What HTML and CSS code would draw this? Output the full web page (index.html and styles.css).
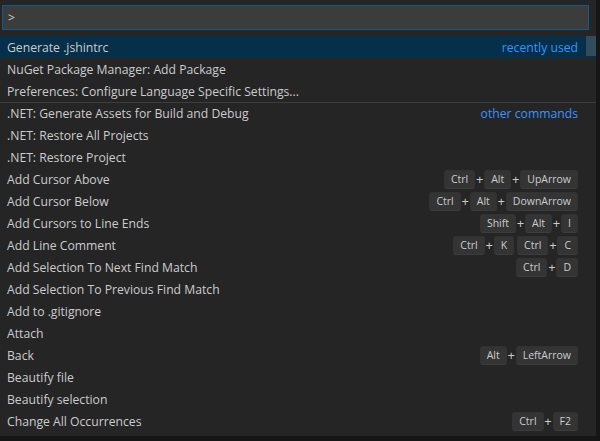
FILE: index.html
```html
<!DOCTYPE html>
<html>
<head>
<meta charset="utf-8">
<link rel="stylesheet" href="styles.css">
</head>
<body>
<div class="widget">
  <div class="input-wrap">
    <div class="input">&gt;</div>
  </div>
  <div class="list">
    <div class="slider"></div>
    <div class="row active"><span class="label">Generate .jshintrc</span><span class="tag">recently used</span></div>
    <div class="row"><span class="label">NuGet Package Manager: Add Package</span></div>
    <div class="row"><span class="label">Preferences: Configure Language Specific Settings...</span></div>
    <div class="row sep"><span class="label">.NET: Generate Assets for Build and Debug</span><span class="tag">other commands</span></div>
    <div class="row"><span class="label">.NET: Restore All Projects</span></div>
    <div class="row"><span class="label">.NET: Restore Project</span></div>
    <div class="row"><span class="label">Add Cursor Above</span><span class="keys"><kbd>Ctrl</kbd><i>+</i><kbd>Alt</kbd><i>+</i><kbd>UpArrow</kbd></span></div>
    <div class="row"><span class="label">Add Cursor Below</span><span class="keys"><kbd>Ctrl</kbd><i>+</i><kbd>Alt</kbd><i>+</i><kbd>DownArrow</kbd></span></div>
    <div class="row"><span class="label">Add Cursors to Line Ends</span><span class="keys"><kbd>Shift</kbd><i>+</i><kbd>Alt</kbd><i>+</i><kbd>I</kbd></span></div>
    <div class="row"><span class="label">Add Line Comment</span><span class="keys"><kbd>Ctrl</kbd><i>+</i><kbd>K</kbd><b class="chord"></b><kbd>Ctrl</kbd><i>+</i><kbd>C</kbd></span></div>
    <div class="row"><span class="label">Add Selection To Next Find Match</span><span class="keys"><kbd>Ctrl</kbd><i>+</i><kbd>D</kbd></span></div>
    <div class="row"><span class="label">Add Selection To Previous Find Match</span></div>
    <div class="row"><span class="label">Add to .gitignore</span></div>
    <div class="row"><span class="label">Attach</span></div>
    <div class="row"><span class="label">Back</span><span class="keys"><kbd>Alt</kbd><i>+</i><kbd>LeftArrow</kbd></span></div>
    <div class="row"><span class="label">Beautify file</span></div>
    <div class="row"><span class="label">Beautify selection</span></div>
    <div class="row"><span class="label">Change All Occurrences</span><span class="keys"><kbd>Ctrl</kbd><i>+</i><kbd>F2</kbd></span></div>
  </div>
</div>
</body>
</html>
```
FILE: styles.css
```css
html, body {
  margin: 0;
  padding: 0;
  background: #161616;
  height: 100%;
  overflow: hidden;
}
.widget {
  width: 596px;
  height: 436px;
  background: #252526;
  box-sizing: border-box;
  padding-top: 5px;
  font-family: "Open Sans", "Noto Sans", sans-serif;
  font-size: 12.2px;
  color: #cccccc;
}
.input-wrap {
  padding: 0 7px 0 2px;
}
.input {
  box-sizing: border-box;
  height: 25px;
  background: #3c3c3c;
  border: 1px solid #0e5a8c;
  padding: 0 5px;
  line-height: 23px;
  font-size: 12.2px;
  color: #cccccc;
}
.list {
  position: relative;
  margin-top: 6px;
}
.slider {
  position: absolute;
  top: 0;
  right: 0;
  width: 10px;
  height: 20px;
  background: rgba(121, 121, 121, 0.4);
}
.row {
  box-sizing: border-box;
  height: 22px;
  display: flex;
  align-items: center;
  justify-content: space-between;
  padding: 0 18px 0 7px;
  white-space: nowrap;
}
.row.active {
  background: #062f4a;
}
.row.sep {
  border-top: 1px solid #3c3c3c;
}
.tag {
  color: #3794ff;
}
.keys {
  display: flex;
  align-items: center;
}
kbd {
  font-family: inherit;
  font-size: 10.5px;
  line-height: 13px;
  padding: 2px 6px;
  border-radius: 3px;
  background: rgba(128, 128, 128, 0.17);
  border: 1px solid rgba(51, 51, 51, 0.6);
  border-bottom-color: rgba(68, 68, 68, 0.6);
  color: #cccccc;
}
.keys i {
  font-style: normal;
  font-size: 13px;
  line-height: 13px;
  width: 9px;
  text-align: center;
}
.chord {
  width: 3px;
}
```
